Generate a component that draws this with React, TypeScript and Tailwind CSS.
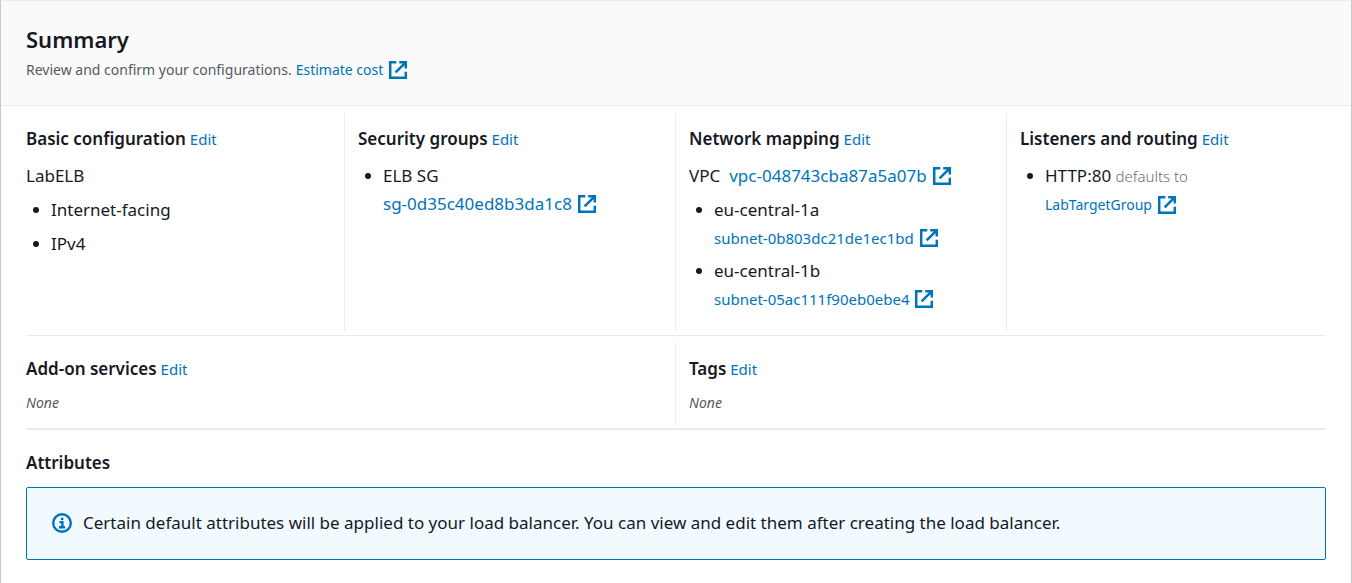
import type { ReactNode } from "react";

function ExternalIcon() {
  return (
    <svg viewBox="0 0 20 20" className="h-5 w-5 shrink-0" fill="none" stroke="#0073bb" strokeWidth="2.5" aria-hidden="true">
      <path d="M8.3 2.2H2.2v15.6h15.6v-6" />
      <path d="M11.2 2.2h6.6v6.4M17.4 2.6 7.6 12.4" />
    </svg>
  );
}

function InfoIcon() {
  return (
    <svg viewBox="0 0 20 20" className="h-5 w-5 shrink-0" fill="none" stroke="#0073bb" aria-hidden="true">
      <circle cx="10" cy="10" r="8.8" strokeWidth="2.4" />
      <path d="M7.5 9.1H10.4V14.2M7 14.2h6" strokeWidth="2.4" />
      <path d="M8.8 5.9h2.6" strokeWidth="2.4" />
    </svg>
  );
}

const linkSizes = {
  small: "text-sm",
  medium: "text-[15px]",
  large: "text-[17px]",
};

function ExternalLink({ children, size = "small" }: { children: ReactNode; size?: keyof typeof linkSizes }) {
  return (
    <a href="#" className={`inline-flex items-center gap-[5px] text-[#0073bb] ${linkSizes[size]}`}>
      {children}
      <ExternalIcon />
    </a>
  );
}

function Heading({ children, edit = true }: { children: string; edit?: boolean }) {
  return (
    <div className="flex items-baseline gap-1 leading-7">
      <h3 className="text-[17px] font-semibold">{children}</h3>
      {edit && (
        <a href="#" aria-label={`Edit ${children}`} className="text-[15px] text-[#0073bb]">
          Edit
        </a>
      )}
    </div>
  );
}

function Column({ children, first = false }: { children: ReactNode; first?: boolean }) {
  return (
    <section className={`min-w-0 border-l pr-3 pt-3 ${first ? "border-transparent pl-3" : "border-[#eaeded] pl-[13px]"}`}>
      {children}
    </section>
  );
}

function Item({ children }: { children: ReactNode }) {
  return (
    <li className="flex gap-3">
      <span className="ml-[7px] mt-[11px] h-1.5 w-1.5 shrink-0 rounded-full bg-[#16191f]" />
      <div className="min-w-0">{children}</div>
    </li>
  );
}

export default function App() {
  return (
    <main className="min-h-screen border border-b-0 border-[#c6cacc] border-t-[#eaeded] bg-white font-['Noto_Sans',sans-serif] text-[17px] leading-7 text-[#16191f]">
      <header className="border-b border-[#eaeded] bg-[#fafafa] px-[25px] pb-[21px] pt-[22px]">
        <h2 className="text-[22px] font-semibold leading-8">Summary</h2>
        <p className="mt-[1px] flex items-center gap-1 text-sm leading-7 text-[#545b64]">
          Review and confirm your configurations. <ExternalLink>Estimate cost</ExternalLink>
        </p>
      </header>

      <div className="pl-3 pr-3.5 pt-[7px]">
        <div className="grid grid-cols-4">
          <Column first>
            <Heading>Basic configuration</Heading>
            <p className="mt-[9px]">LabELB</p>
            <ul className="mt-1.5 flex flex-col gap-1.5">
              <Item>Internet-facing</Item>
              <Item>IPv4</Item>
            </ul>
          </Column>
          <Column>
            <Heading>Security groups</Heading>
            <ul className="mt-[9px]">
              <Item>
                <p>ELB SG</p>
                <ExternalLink size="large">sg-0d35c40ed8b3da1c8</ExternalLink>
              </Item>
            </ul>
          </Column>
          <Column>
            <Heading>Network mapping</Heading>
            <p className="mt-[9px] flex gap-[9px]">
              VPC <ExternalLink size="large">vpc-048743cba87a5a07b</ExternalLink>
            </p>
            <ul className="mt-1.5 flex flex-col gap-[5px] pb-[18px]">
              <Item>
                <p>eu-central-1a</p>
                <ExternalLink size="medium">subnet-0b803dc21de1ec1bd</ExternalLink>
              </Item>
              <Item>
                <p>eu-central-1b</p>
                <ExternalLink size="medium">subnet-05ac111f90eb0ebe4</ExternalLink>
              </Item>
            </ul>
          </Column>
          <Column>
            <Heading>Listeners and routing</Heading>
            <ul className="mt-[9px]">
              <Item>
                <p>
                  HTTP:80 <span className="text-[15px] font-light text-[#687078]">defaults to</span>
                </p>
                <ExternalLink>LabTargetGroup</ExternalLink>
              </Item>
            </ul>
          </Column>
        </div>
      </div>

      <div className="mx-[25px] mt-1 border-t border-[#eaeded]" />

      <div className="grid grid-cols-2 pl-3 pr-3.5 pt-[7px]">
        <Column first>
          <Heading>Add-on services</Heading>
          <p className="mt-1.5 pb-2 text-sm italic leading-7 text-[#545b64]">None</p>
        </Column>
        <Column>
          <Heading>Tags</Heading>
          <p className="mt-1.5 pb-2 text-sm italic leading-7 text-[#545b64]">None</p>
        </Column>
      </div>

      <section className="mx-[25px] mt-[3px] border-t-2 border-[#eaeded] pb-5 pt-[19px]">
        <Heading edit={false}>Attributes</Heading>
        <div role="note" className="mt-2.5 flex items-center gap-[11px] rounded-xs border border-[#0073bb] bg-[#f1faff] px-[25px] pb-[22px] pt-[21px]">
          <InfoIcon />
          <p>Certain default attributes will be applied to your load balancer. You can view and edit them after creating the load balancer.</p>
        </div>
      </section>
    </main>
  );
}
